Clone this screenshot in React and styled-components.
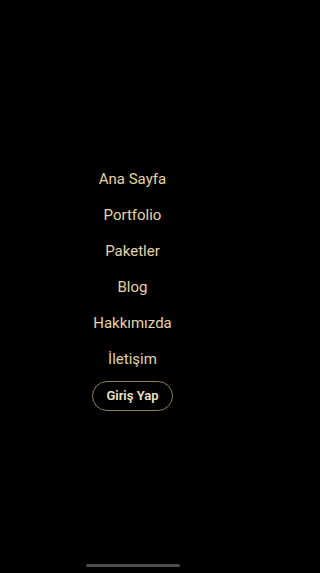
import React from "react";
import styled, { createGlobalStyle } from "styled-components";

const GlobalStyle = createGlobalStyle`
  html, body {
    margin: 0;
    padding: 0;
    background: #000;
  }
  body {
    font-family: Roboto, "Noto Sans", sans-serif;
    -webkit-font-smoothing: antialiased;
  }
`;

const Screen = styled.div`
  position: relative;
  width: 265px;
  height: 573px;
  background: #000;
  display: flex;
  flex-direction: column;
  align-items: center;
  justify-content: center;
  overflow: hidden;
`;

const Nav = styled.nav`
  display: flex;
  flex-direction: column;
  align-items: center;
  margin-top: -2px;
`;

const NavLink = styled.a`
  display: block;
  padding: 8px 0;
  font-size: 15px;
  line-height: 20px;
  font-weight: 400;
  color: #e4d3a6;
  text-decoration: none;
`;

const LoginButton = styled.button`
  margin-top: 4px;
  height: 30px;
  padding: 0 13px;
  border: 1px solid #8c7c58;
  border-radius: 999px;
  background: transparent;
  color: #efe3c4;
  font-family: Roboto, "Noto Sans", sans-serif;
  font-size: 13px;
  font-weight: 600;
  line-height: 28px;
`;

const HomeIndicator = styled.div`
  position: absolute;
  left: 50%;
  bottom: 6px;
  width: 94px;
  height: 3px;
  margin-left: -47px;
  border-radius: 2px;
  background: #4d4d4d;
`;

const links = ["Ana Sayfa", "Portfolio", "Paketler", "Blog", "Hakkımızda", "İletişim"];

export default function App() {
  return (
    <>
      <GlobalStyle />
      <Screen>
        <Nav>
          {links.map((label) => (
            <NavLink key={label} href="#">
              {label}
            </NavLink>
          ))}
          <LoginButton type="button">Giriş Yap</LoginButton>
        </Nav>
        <HomeIndicator />
      </Screen>
    </>
  );
}
